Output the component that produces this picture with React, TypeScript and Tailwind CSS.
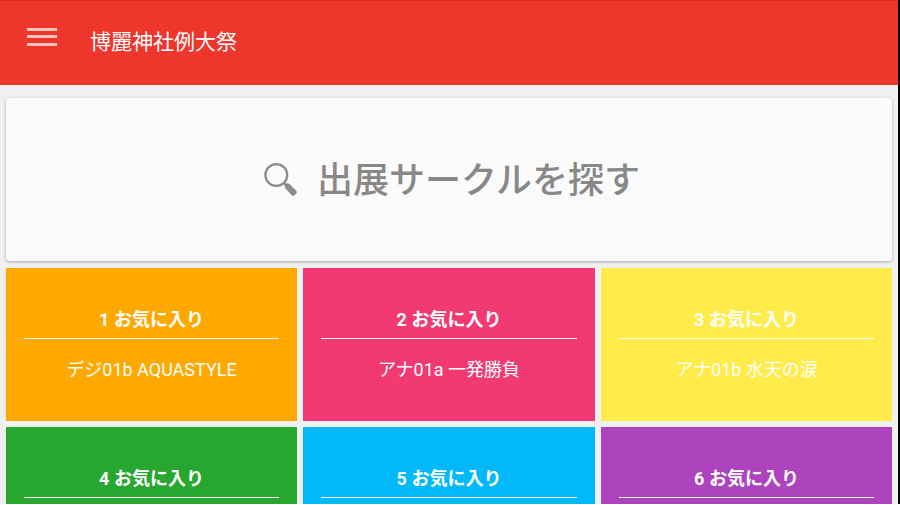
const cards = [
  { n: 1, bg: 'bg-[#ffa800]', circle: 'デジ01b AQUASTYLE' },
  { n: 2, bg: 'bg-[#f13a74]', circle: 'アナ01a 一発勝負' },
  { n: 3, bg: 'bg-[#ffeb49]', circle: 'アナ01b 水天の涙' },
  { n: 4, bg: 'bg-[#28a730]', circle: '' },
  { n: 5, bg: 'bg-[#01b9f9]', circle: '' },
  { n: 6, bg: 'bg-[#ad44bd]', circle: '' },
];

function Header() {
  return (
    <header className="flex h-[85px] shrink-0 border-t border-[#dc2a1c] bg-[#ee362d] pl-[27px]">
      <button aria-label="menu" className="mt-[27px] flex h-[18px] w-[30px] flex-col">
        <span className="h-[3px] w-full bg-[#f9c3c0]" />
        <span className="mt-1 h-[3px] w-full bg-[#f9c3c0]" />
        <span className="mt-[5px] h-[3px] w-full bg-[#f9c3c0]" />
      </button>
      <h1 className="ml-[33px] mt-[26px] text-[21px] leading-[30px] text-white">博麗神社例大祭</h1>
    </header>
  );
}

function SearchPanel() {
  return (
    <button className="flex h-[163px] w-full shrink-0 items-center rounded-[4px] bg-[#fbfbfb] pl-[258px] text-[#888] shadow-[0_1px_3px_rgba(0,0,0,0.3)]">
      <svg width="34" height="34" viewBox="0 0 34 34" className="shrink-0">
        <circle cx="12.300" cy="12" r="10.900" fill="none" stroke="#8c8c8c" strokeWidth="2.300" />
        <path d="M19.500 19.500L24 24" stroke="#8c8c8c" strokeWidth="2.500" />
        <path d="M22.200 20.800C23.200 19.900 24.600 20 25.500 20.900L32 27.400C33.100 28.500 33 29.600 32.200 30.500L30.500 32.200C29.600 33 28.400 33 27.400 32L21.500 25.500C20.700 24.600 20.600 23.500 21.400 22.600Z" fill="#8c8c8c" />
      </svg>
      <span className="ml-[19px] mt-[2px] whitespace-nowrap text-[36px] leading-[50px] font-medium">出展サークルを探す</span>
    </button>
  );
}

export default function App() {
  return (
    <div className="h-[505px] w-[900px] overflow-hidden bg-white font-['Roboto','Noto_Sans_CJK_JP',sans-serif]">
      <div className="flex h-[504px] w-full flex-col overflow-hidden border-r-2 border-black bg-[#f0f0f0]">
        <Header />
        <main className="flex flex-col gap-[7px] px-1.5 pt-[13px]">
          <SearchPanel />
          <div className="grid grid-cols-[291px_292px_291px] gap-1.5">
            {cards.map((c) => (
              <section key={c.n} className={`h-[153px] px-[18px] pt-[39px] text-center text-[18px] text-white ${c.bg}`}>
                <h2 className="border-b border-white pb-[5px] leading-[26px] font-bold">{c.n} お気に入り</h2>
                <p className="mt-[18px] leading-[26px]">{c.circle}</p>
              </section>
            ))}
          </div>
        </main>
      </div>
    </div>
  );
}
